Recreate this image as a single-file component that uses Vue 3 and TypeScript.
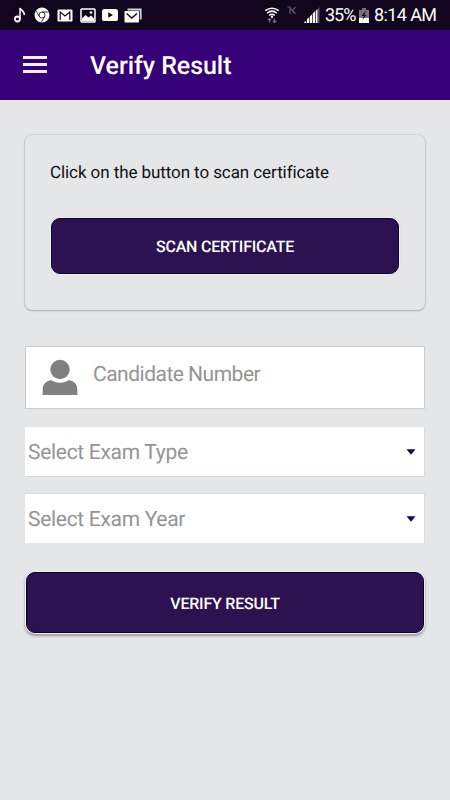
<script setup lang="ts">
import { ref } from 'vue'

interface Picker {
  id: string
  label: string
}

const candidateNumber = ref<string>('')
const pickers: Picker[] = [
  { id: 'type', label: 'Select Exam Type' },
  { id: 'year', label: 'Select Exam Year' },
]
</script>

<template>
  <div class="screen">
    <div class="status">
      <div class="notifications">
        <svg class="note" width="12" height="16" viewBox="0 0 12 16">
          <circle cx="3.4" cy="12" r="2.5" fill="none" stroke="#fff" stroke-width="1.8" />
          <path d="M6 12V1C6.5 3.6 11 3.8 10.2 8" fill="none" stroke="#fff" stroke-width="1.5" />
        </svg>
        <svg class="chrome" width="16" height="16" viewBox="0 0 16 16">
          <circle cx="8" cy="8" r="7.5" fill="#fff" />
          <circle cx="8" cy="8" r="3" fill="#fff" stroke="#12061f" stroke-width=".8" />
          <path d="M8 5h6.8M5.4 9.5L2 3.6M10.6 9.5L7.3 15.3" stroke="#12061f" stroke-width=".8" />
        </svg>
        <svg class="gmail" width="16" height="13" viewBox="0 0 16 13">
          <rect x=".5" y=".5" width="15" height="12" rx="1.2" fill="#fff" />
          <path d="M3.2 11V3L8 7l4.800-4v8" fill="none" stroke="#12061f" stroke-width="1.2" />
        </svg>
        <svg class="photo" width="16" height="15" viewBox="0 0 16 15">
          <rect x="1" y="1" width="14" height="13" rx=".8" fill="#12061f" stroke="#fff" stroke-width="1.5" />
          <path d="M2 13V10.500L5.500 7l3 2.500L11 7.500l3 3V13z" fill="#fff" />
          <circle cx="11" cy="4.500" r="1.300" fill="#fff" />
        </svg>
        <svg class="video" width="16" height="12" viewBox="0 0 16 12">
          <rect width="16" height="12" rx="2.600" fill="#fff" />
          <path d="M6.300 3.200v5.600L11 6z" fill="#12061f" />
        </svg>
        <svg class="mail" width="18" height="15" viewBox="0 0 18 15">
          <path d="M3.500 1.500h13.200v10" fill="none" stroke="#d8d5dc" stroke-width="1.800" />
          <rect x=".5" y="3" width="14.500" height="11.500" rx=".8" fill="#fff" />
          <path d="M2.500 5.500l5.300 4.500L13 5.500" fill="none" stroke="#12061f" stroke-width="1.400" />
        </svg>
      </div>
      <div class="system">
        <svg class="wifi" width="16" height="16" viewBox="0 0 16 16">
          <g fill="none" stroke="#fff" stroke-width="1.600">
            <path d="M1.300 3.700Q8-1.300 14.700 3.700" />
            <path d="M3.200 6.200Q8 2.200 12.800 6.200" />
            <path d="M5.200 8.500Q8 6 10.800 8.500" />
          </g>
          <circle cx="8" cy="9.800" r="1.200" fill="#fff" />
          <path d="M5.500 15.500v-4M3.800 13.200l1.700-1.700 1.700 1.700M10.500 11.500v4M8.800 13.800l1.700 1.700 1.700-1.700" fill="none" stroke="#77717e" stroke-width="1.200" />
        </svg>
        <svg class="muted" width="10" height="9" viewBox="0 0 10 9">
          <path d="M.5 1h2l5 6.500M3 2.500V8M8.500 1L5.500 4l3 4" fill="none" stroke="#625b6b" stroke-width="1.200" />
        </svg>
        <svg class="signal" width="16" height="16" viewBox="0 0 16 16">
          <path d="M13 2.500L15.500 0v16H13z" fill="#5b5463" />
          <path d="M.3 14.500h2.100V16H.3zM3 12.200L5.200 10V16H3zM5.900 9.500l2.200-2.200V16H5.900zM8.800 6.500L11.200 4.100V16H8.800zM11.900 3.500l1.400-1.300V16h-1.400z" fill="#fff" />
        </svg>
        <span class="percent">35%</span>
        <svg class="battery" width="10" height="15" viewBox="0 0 10 15">
          <path d="M0 2h3V0h4v2h3v8H0z" fill="#77717e" />
          <path d="M0 10h10v5H0z" fill="#fff" />
          <path d="M6.500 3L2.500 8h2.300L3.500 12l4-5H5.400z" fill="#12061f" />
        </svg>
        <span class="clock">8:14 AM</span>
      </div>
    </div>

    <header class="toolbar">
      <button class="menu" type="button" aria-label="Menu">
        <i></i><i></i><i></i>
      </button>
      <h1 class="title">Verify Result</h1>
    </header>

    <main class="content">
      <section class="card">
        <p class="hint">Click on the button to scan certificate</p>
        <button class="action scan" type="button">SCAN CERTIFICATE</button>
      </section>

      <label class="candidate">
        <svg class="person" width="36" height="37" viewBox="0 0 36 37">
          <circle cx="18" cy="10.500" r="9.700" fill="#808080" />
          <path d="M.7 36V30.500C.7 25.500 4 22 8.500 21.300Q10 21.300 11.500 22.200Q18 25.200 24.500 22.200Q26 21.300 27.500 21.300C32 22 35.300 25.500 35.300 30.500V36z" fill="#808080" />
        </svg>
        <input v-model="candidateNumber" class="entry" type="text" placeholder="Candidate Number" />
      </label>

      <button v-for="picker in pickers" :key="picker.id" class="picker" type="button">
        <span class="picker-label">{{ picker.label }}</span>
        <svg class="arrow" width="10" height="6" viewBox="0 0 10 6">
          <path d="M.5 .3h9L5 5.700z" fill="#1a0058" />
        </svg>
      </button>

      <button class="action verify" type="button">VERIFY RESULT</button>
    </main>
  </div>
</template>

<style>
body {
  margin: 0;
  background: #e5e6e8;
}
</style>

<style scoped>
.screen {
  width: 450px;
  height: 800px;
  overflow: hidden;
  background: #e5e6e8;
  font-family: Roboto, "Liberation Sans", sans-serif;
  text-rendering: geometricPrecision;
}
button,
input {
  box-sizing: border-box;
  margin: 0;
  padding: 0;
  border: 0;
  font-family: inherit;
  text-rendering: inherit;
}
svg {
  display: block;
  flex: none;
}
.status {
  box-sizing: border-box;
  height: 30px;
  display: flex;
  justify-content: space-between;
  padding: 0 14px;
  background: #12061f;
  color: #fff;
}
.notifications,
.system {
  display: flex;
  align-items: center;
}
.chrome { margin-left: 8px; }
.gmail { margin-left: 7px; }
.photo { margin-left: 7px; }
.video { margin-left: 6px; }
.mail { margin-left: 6px; }
.muted { margin: -10px 0 0 7px; }
.signal { margin-left: 7px; }
.percent,
.clock {
  font-size: 18px;
  line-height: 30px;
  white-space: nowrap;
  padding-top: 2px;
}
.percent {
  width: 31px;
  margin-left: 5px;
  letter-spacing: -1px;
}
.battery { margin-left: 3px; }
.clock {
  width: 62px;
  margin-left: 5px;
  letter-spacing: -0.6px;
}
.toolbar {
  box-sizing: border-box;
  height: 70px;
  display: flex;
  align-items: center;
  padding-left: 23px;
  background: #350078;
  color: #fff;
}
.menu {
  width: 24px;
  display: flex;
  flex-direction: column;
  gap: 4px;
  margin-top: -1px;
  background: none;
}
.menu i {
  height: 3px;
  background: #f3effa;
}
.title {
  margin: 4px 0 0 43px;
  font-size: 25px;
  line-height: 30px;
  font-weight: 500;
  letter-spacing: -0.05px;
}
.content {
  display: flex;
  flex-direction: column;
  padding: 35px 25px 0;
}
.card {
  box-sizing: border-box;
  height: 175px;
  padding: 25px 26px 0;
  border-radius: 7px;
  box-shadow: 0 0 1px 1px rgba(0, 0, 0, 0.08), 0 1px 2px rgba(0, 0, 0, 0.2);
  background: #e5e6e8;
}
.hint {
  margin: 0 0 0 -1px;
  font-size: 17px;
  line-height: 26px;
  letter-spacing: -0.08px;
  color: #111;
  white-space: nowrap;
}
.action {
  border: 1px solid #12003f;
  border-radius: 9px;
  background: #2d1252;
  color: #fff;
  font-size: 16px;
  font-weight: 500;
  letter-spacing: -0.22px;
}
.scan {
  display: block;
  width: 348px;
  height: 56px;
  margin-top: 32px;
  box-shadow: 0 0 0 1px #eff0f1, 0 0 1px 1px #cfd0d2;
}
.candidate {
  box-sizing: border-box;
  display: flex;
  height: 63px;
  margin-top: 36px;
  padding: 11px 16px;
  border: 1px solid #cbcccf;
  background: #fff;
}
.person {
  margin-top: 0.5px;
}
.entry {
  width: 310px;
  height: 30px;
  margin: 2px 0 0 15px;
  font-size: 21px;
  letter-spacing: -0.5px;
  background: none;
  outline: none;
  color: #333;
}
.entry::placeholder {
  color: #949494;
  opacity: 1;
}
.picker {
  display: flex;
  align-items: center;
  justify-content: space-between;
  height: 50px;
  margin-top: 18px;
  padding: 0 8px 0 3px;
  border: solid #d8d9db;
  border-width: 0 1px 1px 0;
  background: #fff;
}
.picker + .picker {
  margin-top: 16px;
  border-width: 1px 1px 0 0;
}
.picker-label {
  padding-top: 2px;
  font-size: 21px;
  line-height: 28px;
  letter-spacing: -0.3px;
  color: #949494;
}
.verify {
  width: 398px;
  height: 61px;
  margin: 29px 1px 0;
  padding-top: 1px;
  border-color: #05002a;
  box-shadow: 0 0 0 1px #efeff2, 0 2px 3px 1px rgba(0, 0, 0, 0.35);
}
</style>
